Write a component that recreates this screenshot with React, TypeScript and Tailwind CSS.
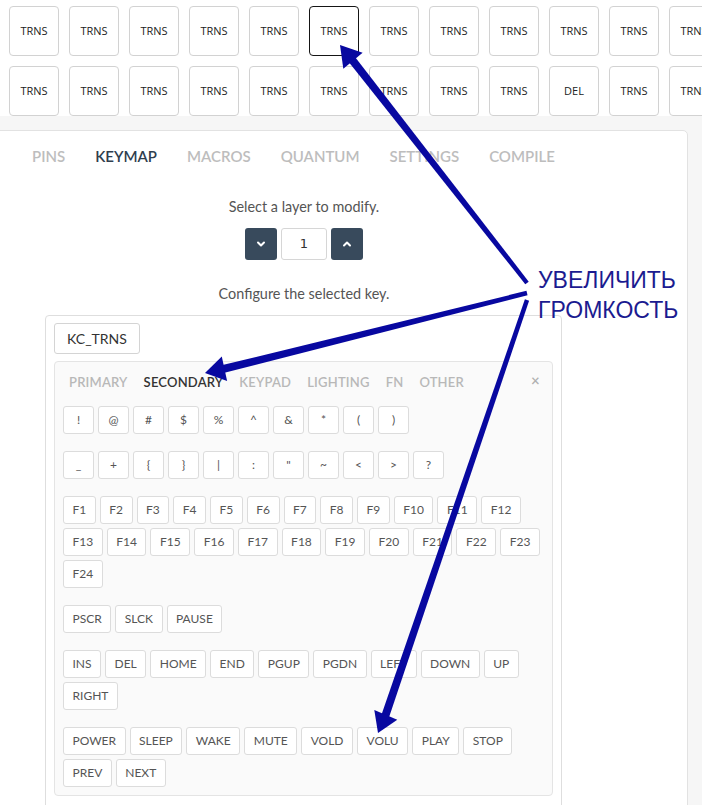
import { ChevronDown, ChevronUp } from 'lucide-react';

type Pt = [number, number];

// arrow shaft tapers from start to the base of the head
function Arrow({ from, base, tip }: { from: Pt; base: Pt; tip: Pt }) {
  const dx = base[0] - from[0];
  const dy = base[1] - from[1];
  const len = Math.hypot(dx, dy);
  const nx = -dy / len;
  const ny = dx / len;
  const w0 = 2.2;
  const w1 = 4;
  const shaft = [
    [from[0] + nx * w0, from[1] + ny * w0],
    [base[0] + nx * w1, base[1] + ny * w1],
    [base[0] - nx * w1, base[1] - ny * w1],
    [from[0] - nx * w0, from[1] - ny * w0],
  ];
  const hx = tip[0] - base[0];
  const hy = tip[1] - base[1];
  const hl = Math.hypot(hx, hy);
  const px = -hy / hl;
  const py = hx / hl;
  const head = [
    tip,
    [base[0] + px * 12.5 - (hx / hl) * 2, base[1] + py * 12.5 - (hy / hl) * 2],
    [base[0] - px * 12.5 - (hx / hl) * 2, base[1] - py * 12.5 - (hy / hl) * 2],
  ];
  return (
    <g fill="#0808a0">
      <polygon points={shaft.map((p) => p.join(',')).join(' ')} />
      <polygon points={head.map((p) => p.join(',')).join(' ')} />
    </g>
  );
}

function TopKey({ label, selected }: { label: string; selected?: boolean }) {
  return (
    <div
      className={`flex h-[50px] w-[50px] shrink-0 items-center justify-center rounded-[4px] border bg-white font-['Open_Sans',sans-serif] text-[11px] text-[#222] ${
        selected ? 'border-[#151515]' : 'border-[#d2d2d2]'
      }`}
    >
      {label}
    </div>
  );
}

function Key({ label }: { label: string }) {
  return (
    <div className="flex h-[28px] min-w-[31px] items-center justify-center rounded-[3px] border border-[#dcdcdc] bg-white px-[8.5px] text-[12px] text-[#555]">
      {label}
    </div>
  );
}

export default function App() {
  const row1 = Array.from({ length: 12 }, () => 'TRNS');
  const row2 = row1.map((l, i) => (i === 9 ? 'DEL' : l));

  const tabs = ['PINS', 'KEYMAP', 'MACROS', 'QUANTUM', 'SETTINGS', 'COMPILE'];
  const keyTabs = ['PRIMARY', 'SECONDARY', 'KEYPAD', 'LIGHTING', 'FN', 'OTHER'];

  const groups = [
    ['!', '@', '#', '$', '%', '^', '&', '*', '(', ')'],
    ['_', '+', '{', '}', '|', ':', '"', '~', '<', '>', '?'],
    Array.from({ length: 24 }, (_, i) => `F${i + 1}`),
    ['PSCR', 'SLCK', 'PAUSE'],
    ['INS', 'DEL', 'HOME', 'END', 'PGUP', 'PGDN', 'LEFT', 'DOWN', 'UP', 'RIGHT'],
    ['POWER', 'SLEEP', 'WAKE', 'MUTE', 'VOLD', 'VOLU', 'PLAY', 'STOP', 'PREV', 'NEXT'],
  ];

  return (
    <div className="relative h-[805px] w-[702px] overflow-hidden bg-[#f6f6f6] font-['Lato',sans-serif]">
      {/* keyboard preview */}
      <div className="flex h-[116px] flex-col gap-[10px] overflow-hidden bg-white pl-[9px] pt-[6px]">
        <div className="flex gap-[10px]">
          {row1.map((l, i) => (
            <TopKey key={i} label={l} selected={i === 5} />
          ))}
        </div>
        <div className="flex gap-[10px]">
          {row2.map((l, i) => (
            <TopKey key={i} label={l} />
          ))}
        </div>
      </div>

      <div className="ml-[-1px] mt-[14px] h-[700px] w-[689px] rounded-tr-[5px] border border-[#e2e2e2] bg-white">
        <div className="flex gap-[30px] pl-[32px] pt-[15px] text-[15px] font-semibold leading-[20px]">
          {tabs.map((t) => (
            <span key={t} className={t === 'KEYMAP' ? 'text-[#2f3e4e]' : 'text-[#bdbdbd]'}>
              {t}
            </span>
          ))}
        </div>

        <div className="flex w-[608px] flex-col items-center">
          <p className="mt-[32px] text-[14.4px] leading-[18px] text-[#555]">Select a layer to modify.</p>
          <div className="mt-[12px] flex gap-[4px]">
            <button className="flex h-[32px] w-[32px] items-center justify-center rounded-[3px] bg-[#384a5c] text-white">
              <ChevronDown size={12} strokeWidth={4} />
            </button>
            <div className="flex h-[32px] w-[46px] items-center justify-center rounded-[3px] border border-[#d6d6d6] bg-white font-['DejaVu_Sans',sans-serif] text-[13px] text-[#333]">
              1
            </div>
            <button className="flex h-[32px] w-[32px] items-center justify-center rounded-[3px] bg-[#384a5c] text-white">
              <ChevronUp size={12} strokeWidth={4} />
            </button>
          </div>
          <p className="mt-[25px] text-[14.4px] leading-[18px] text-[#555]">Configure the selected key.</p>

          <div className="ml-[45px] mt-[12px] h-[500px] w-[517px] self-start rounded-[4px] border border-[#dedede] bg-white px-[8px] pt-[7px]">
            <div className="flex h-[31px] w-[86px] items-center justify-center rounded-[3px] border border-[#d4d4d4] text-[14px] text-[#333]">
              KC_TRNS
            </div>
            <div className="mt-[7px] rounded-[4px] border border-[#e4e4e4] bg-[#fafafa] px-[8px] pb-[8px] pt-[12px]">
              <div className="flex items-center pl-[6px] pr-[4px] text-[13px] font-semibold leading-[16px] tracking-[0.2px]">
                <div className="flex gap-[16px]">
                  {keyTabs.map((t) => (
                    <span key={t} className={t === 'SECONDARY' ? 'text-[#333]' : 'text-[#b8b8b8]'}>
                      {t}
                    </span>
                  ))}
                </div>
                <span className="ml-auto mt-[-4px] text-[15px] text-[#b0b0b0]">×</span>
              </div>
              <div className="mt-[16px] flex flex-col gap-[17px]">
                {groups.map((g, i) => (
                  <div key={i} className="flex flex-wrap gap-[4px]">
                    {g.map((k) => (
                      <Key key={k} label={k} />
                    ))}
                  </div>
                ))}
              </div>
            </div>
          </div>
        </div>
      </div>

      {/* annotation */}
      <div className="absolute left-[538px] top-[265px] font-['Liberation_Sans',Arial,sans-serif] text-[23px] leading-[30px] text-[#1b1b90]">
        <div>УВЕЛИЧИТЬ</div>
        <div>ГРОМКОСТЬ</div>
      </div>
      <svg className="pointer-events-none absolute left-0 top-0" width="702" height="805">
        <Arrow from={[527, 283]} base={[351.7, 59.2]} tip={[340, 45]} />
        <Arrow from={[527, 293]} base={[222.5, 369.2]} tip={[205, 373]} />
        <Arrow from={[527, 300]} base={[385, 716.7]} tip={[378, 733]} />
      </svg>
    </div>
  );
}
